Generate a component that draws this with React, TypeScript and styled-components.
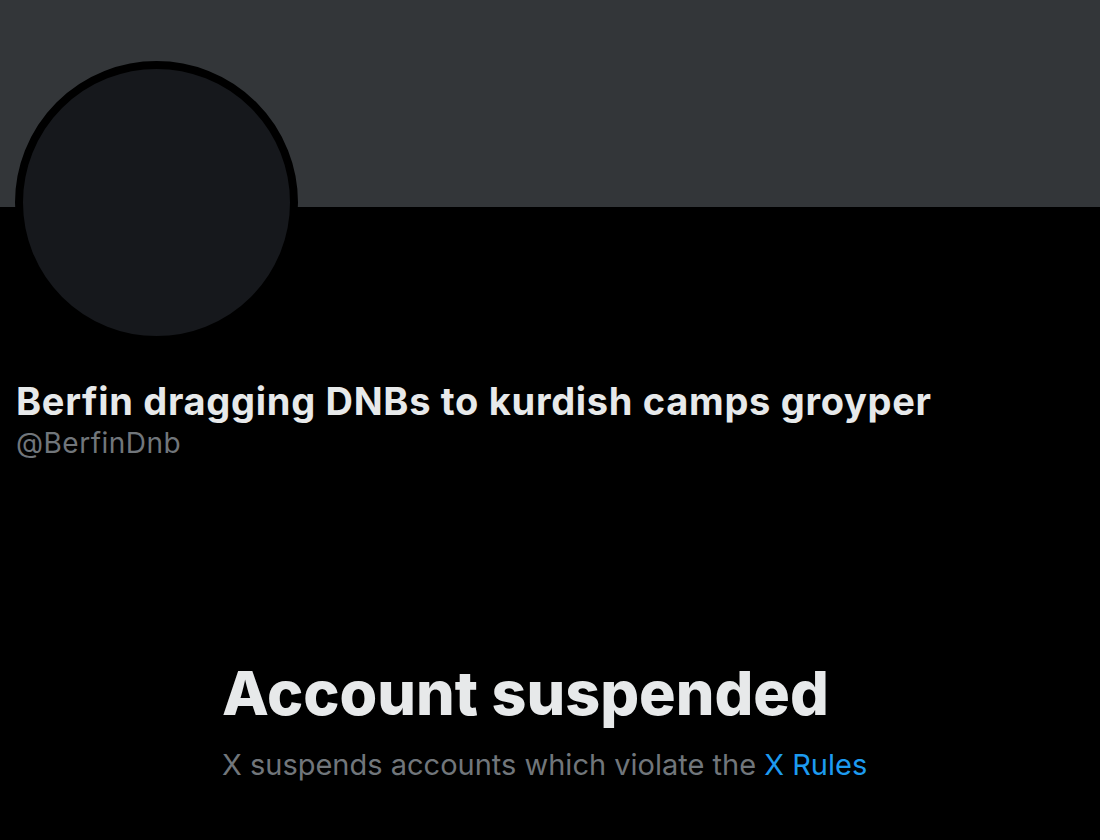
import React from "react";
import styled, { createGlobalStyle } from "styled-components";

const GlobalStyle = createGlobalStyle`
  html, body {
    margin: 0;
    padding: 0;
    background: #000;
  }
  body {
    font-family: Inter, "Liberation Sans", sans-serif;
    color: #e7e9ea;
  }
`;

export default function App() {
  return (
    <>
      <GlobalStyle />
      <Page>
        <Banner />
        <Profile>
          <Avatar />
          <Name>Berfin dragging DNBs to kurdish camps groyper</Name>
          <Handle>@BerfinDnb</Handle>
        </Profile>
        <Empty>
          <EmptyInner>
            <Heading>Account suspended</Heading>
            <Notice>
              X suspends accounts which violate the <RulesLink href="#">X Rules</RulesLink>
            </Notice>
          </EmptyInner>
        </Empty>
      </Page>
    </>
  );
}

const Page = styled.div`
  width: 1100px;
  height: 840px;
  overflow: hidden;
  background: #000;
  display: flex;
  flex-direction: column;
`;

const Banner = styled.div`
  height: 207px;
  background: #333639;
`;

const Profile = styled.div`
  display: flex;
  flex-direction: column;
  align-items: flex-start;
  padding: 0 16px;
`;

const Avatar = styled.div`
  width: 267px;
  height: 267px;
  margin-top: -146px;
  margin-left: -1px;
  border: 8px solid #000;
  border-radius: 50%;
  background: #16181c;
`;

const Name = styled.h1`
  margin: 35px 0 0;
  font-size: 38px;
  line-height: 44px;
  font-weight: 700;
  letter-spacing: 0.7px;
  color: #e7e9ea;
`;

const Handle = styled.div`
  margin-top: 2px;
  font-size: 28px;
  line-height: 36px;
  letter-spacing: 0.5px;
  color: #71767b;
`;

const Empty = styled.div`
  display: flex;
  justify-content: center;
  padding-top: 196px;
`;

const EmptyInner = styled.div`
  width: 656px;
  display: flex;
  flex-direction: column;
`;

const Heading = styled.h2`
  margin: 0;
  font-size: 61px;
  line-height: 72px;
  font-weight: 800;
  letter-spacing: 0px;
  color: #e7e9ea;
`;

const Notice = styled.p`
  margin: 16px 0 0;
  font-size: 29px;
  line-height: 40px;
  color: #71767b;
`;

const RulesLink = styled.a`
  color: #1d9bf0;
  text-decoration: none;
`;
